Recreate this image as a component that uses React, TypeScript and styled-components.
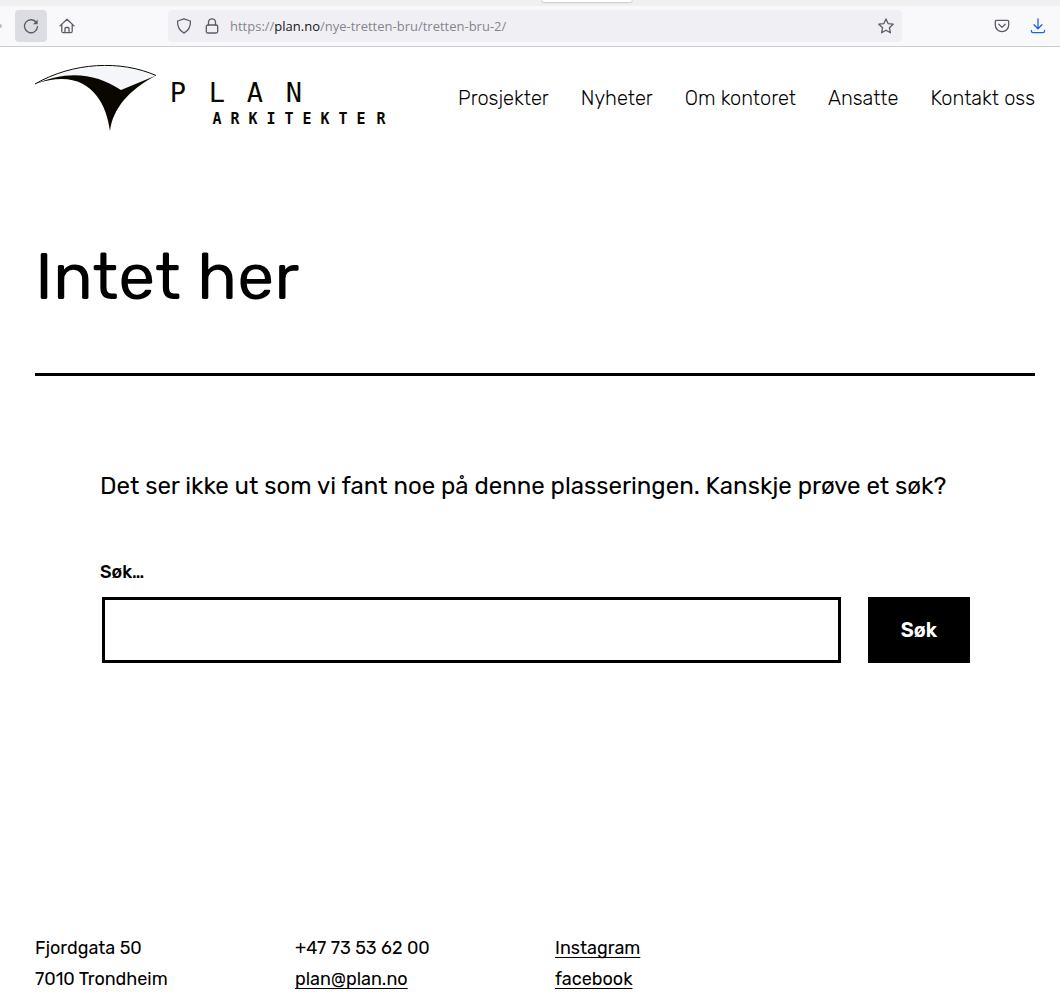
import React from "react";
import styled, { createGlobalStyle } from "styled-components";

const GlobalStyle = createGlobalStyle`
  *, *::before, *::after { box-sizing: border-box; }
  body {
    margin: 0;
    background: #fff;
    color: #000;
    font-family: Rubik, Inter, Roboto, sans-serif;
  }
`;

const TabStrip = styled.div`
  height: 6px;
  padding-left: 542px;
  background: #f0f0f0;
  overflow: hidden;
`;

const TabEdge = styled.div`
  width: 90px;
  height: 2px;
  background: #fff;
  border-radius: 0 0 4px 4px;
  box-shadow: 0 0 2px rgba(0, 0, 0, 0.5);
`;

const Toolbar = styled.div`
  display: flex;
  align-items: center;
  height: 41px;
  padding-right: 6px;
  background: #f9f9fb;
  border-bottom: 1px solid #cccccf;
`;

const ForwardDot = styled.span`
  width: 2px;
  height: 4px;
  margin-right: 13px;
  border-radius: 0 2px 2px 0;
  background: #bdbdc2;
`;

const ToolGroup = styled.div`
  display: flex;
  gap: 4px;
`;

const ToolButton = styled.button<{ $active?: boolean; $color?: string }>`
  display: grid;
  place-items: center;
  width: 32px;
  height: 32px;
  padding: 0;
  border: 0;
  border-radius: 4px;
  background: ${(p) => (p.$active ? "#dcdde2" : "transparent")};
  color: ${(p) => p.$color ?? "#5b5b66"};
`;

const AddressBar = styled.div`
  display: flex;
  flex: 1;
  align-items: center;
  height: 32px;
  margin: 0 84px 0 85px;
  padding: 0 8px;
  gap: 12px;
  border-radius: 4px;
  background: #f0f0f4;
  color: #5b5b66;
`;

const Url = styled.span`
  flex: 1;
  margin-left: -2px;
  color: #85858c;
  font: 13px/20px "Open Sans", "Noto Sans", sans-serif;

  b { color: #15141a; font-weight: 400; }
`;

const Icon = styled.svg`
  display: block;
  width: 16px;
  height: 16px;
  fill: none;
  stroke: currentColor;
  stroke-width: 1.3;
  stroke-linecap: round;
  stroke-linejoin: round;
`;

const Page = styled.div`
  padding: 18px 25px 0 35px;
`;

const Header = styled.header`
  display: flex;
  align-items: center;
  justify-content: space-between;
`;

const Logo = styled.svg`
  display: block;
  width: 352px;
  height: 67px;
`;

const Nav = styled.nav`
  display: flex;
  gap: 32px;
  padding-bottom: 2px;
`;

const NavLink = styled.a`
  color: #000;
  font-size: 20px;
  font-weight: 300;
  line-height: 28px;
  text-decoration: none;
  white-space: nowrap;
`;

const TitleBlock = styled.div`
  padding: 100px 0 51px;
  border-bottom: 3px solid #000;
`;

const Title = styled.h1`
  margin: 0;
  font-size: 66px;
  font-weight: 400;
  line-height: 90px;
`;

const Content = styled.main`
  margin: 90px 65px 0;
`;

const Lead = styled.p`
  margin: 0;
  font-size: 24px;
  line-height: 40px;
`;

const SearchForm = styled.form`
  display: grid;
  grid-template-columns: 1fr auto;
  column-gap: 27px;
  margin-top: 52px;
`;

const SearchLabel = styled.label`
  grid-column: 1 / -1;
  margin-bottom: 11px;
  font-size: 18px;
  font-weight: 500;
  line-height: 28px;
`;

const SearchInput = styled.input`
  min-width: 0;
  height: 66px;
  margin-left: 2px;
  padding: 10px;
  border: 3px solid #000;
  border-radius: 0;
  background: #fff;
  font: inherit;
  font-size: 20px;
`;

const SearchButton = styled.button`
  width: 102px;
  padding: 0;
  border: 0;
  background: #000;
  color: #fff;
  font-family: inherit;
  font-size: 20px;
  font-weight: 600;
`;

const Footer = styled.footer`
  display: grid;
  grid-template-columns: repeat(3, 260px);
  margin-top: 270px;
  font-size: 18px;
  line-height: 31px;
`;

const FooterColumn = styled.div`
  display: flex;
  flex-direction: column;
  align-items: flex-start;
`;

const FooterLink = styled.a`
  color: #000;
  text-decoration: underline;
  text-decoration-thickness: 1px;
  text-underline-offset: 3px;
  text-decoration-skip-ink: none;
`;

const links = ["Prosjekter", "Nyheter", "Om kontoret", "Ansatte", "Kontakt oss"];

function BrowserBar() {
  return (
    <>
      <TabStrip><TabEdge /></TabStrip>
      <Toolbar>
        <ForwardDot />
        <ToolGroup>
          <ToolButton $active aria-label="Reload">
            <Icon viewBox="0 0 16 16">
              <path d="M13.4 4.6A6.5 6.5 0 1 0 14.5 8.6" />
              <path d="M14.6 1.6v4.6H10z" fill="currentColor" stroke="none" />
            </Icon>
          </ToolButton>
          <ToolButton aria-label="Home">
            <Icon viewBox="0 0 16 16">
              <path d="M1 7.9 8 1.2l7 6.7M2.8 6.5v6.7c0 .9.6 1.5 1.5 1.5h7.4c.9 0 1.5-.6 1.5-1.5V6.5M6 14.5v-4c0-.6.4-1 1-1h2c.6 0 1 .4 1 1v4" />
            </Icon>
          </ToolButton>
        </ToolGroup>
        <AddressBar>
          <Icon viewBox="0 0 16 16">
            <path d="M8 .9 14.4 3c.3 5.3-1.7 9.5-6.4 12.1C3.3 12.5 1.3 8.3 1.6 3z" />
          </Icon>
          <Icon viewBox="0 0 16 16">
            <rect x="2.3" y="7" width="11.4" height="8" rx="1.5" />
            <path d="M4.5 7V4.3a3.5 3.5 0 0 1 7 0V7" />
          </Icon>
          <Url>https://<b>plan.no</b>/nye-tretten-bru/tretten-bru-2/</Url>
          <Icon viewBox="0 0 16 16">
            <path d="m8 .9 2.1 4.7 5.1.6-3.8 3.5 1 5.1L8 12.2l-4.400 2.600 1-5.100L.8 6.200l5.100-.6z" />
          </Icon>
        </AddressBar>
        <ToolGroup>
          <ToolButton aria-label="Pocket">
            <Icon viewBox="0 0 16 16">
              <path d="M2.5 2.3h11c.7 0 1.2.5 1.2 1.200V7a6.700 6.700 0 0 1-13.400 0V3.500c0-.7.5-1.200 1.200-1.200zM4.800 6.300 8 9.400l3.200-3.100" />
            </Icon>
          </ToolButton>
          <ToolButton $color="#1a63dc" aria-label="Downloads">
            <Icon viewBox="0 0 16 16">
              <path d="M8 1v9.500M4 6.800l4 4 4-4M1.500 12.500v.7c0 .9.7 1.500 1.500 1.500h10c.8 0 1.500-.6 1.500-1.500v-.7" />
            </Icon>
          </ToolButton>
        </ToolGroup>
      </Toolbar>
    </>
  );
}

function PlanLogo() {
  return (
    <Logo viewBox="0 0 352 67" role="img" aria-label="Plan Arkitekter">
      <path d="M14 13.5C45-1 88-3 121 10.5L86 25.5C66 11 45 9 14 13.5z" fill="#f4f6fa" />
      <path d="M0 19C38-3 86-5 121 10.5" fill="none" stroke="#0a0700" strokeWidth="1" />
      <path d="M0 19C32 5 61 8 86 25L121 10.5C94 25 78 43 75 66C71 34 51 1 0 19z" fill="#0a0700" />
      <g fill="#0a0700" fontFamily="'DejaVu Sans Mono', monospace" textAnchor="middle">
        <text x="143 182 220 259" y="37" fontSize="27">PLAN</text>
        <text x="182 200 218 236 254 272 290 308 326 346" y="59" fontSize="15" fontWeight="700">ARKITEKTER</text>
      </g>
    </Logo>
  );
}

export default function App() {
  return (
    <>
      <GlobalStyle />
      <BrowserBar />
      <Page>
        <Header>
          <PlanLogo />
          <Nav>
            {links.map((label) => (
              <NavLink key={label} href="#">{label}</NavLink>
            ))}
          </Nav>
        </Header>
        <TitleBlock>
          <Title>Intet her</Title>
        </TitleBlock>
        <Content>
          <Lead>Det ser ikke ut som vi fant noe på denne plasseringen. Kanskje prøve et søk?</Lead>
          <SearchForm onSubmit={(e) => e.preventDefault()}>
            <SearchLabel htmlFor="search">Søk…</SearchLabel>
            <SearchInput id="search" type="search" />
            <SearchButton type="submit">Søk</SearchButton>
          </SearchForm>
        </Content>
        <Footer>
          <FooterColumn>
            <span>Fjordgata 50</span>
            <span>7010 Trondheim</span>
          </FooterColumn>
          <FooterColumn>
            <span>+47 73 53 62 00</span>
            <FooterLink href="mailto:plan@plan.no">plan@plan.no</FooterLink>
          </FooterColumn>
          <FooterColumn>
            <FooterLink href="#">Instagram</FooterLink>
            <FooterLink href="#">facebook</FooterLink>
          </FooterColumn>
        </Footer>
      </Page>
    </>
  );
}
